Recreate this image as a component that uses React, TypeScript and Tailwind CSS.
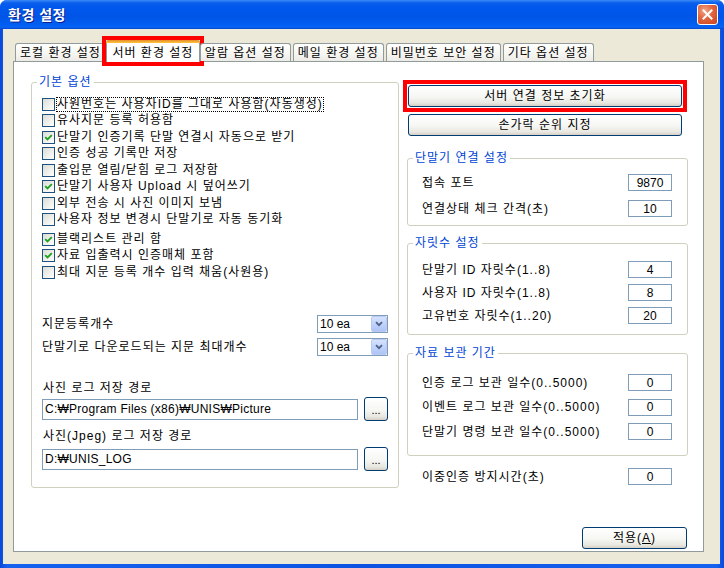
import React from "react";

type Opt = { label: string; checked?: boolean; focus?: boolean };

const basicOptions: Opt[] = [
  { label: "사원번호는 사용자ID를 그대로 사용함(자동생성)", focus: true },
  { label: "유사지문 등록 허용함" },
  { label: "단말기 인증기록 단말 연결시 자동으로 받기", checked: true },
  { label: "인증 성공 기록만 저장" },
  { label: "출입문 열림/닫힘 로그 저장함" },
  { label: "단말기 사용자 Upload 시 덮어쓰기", checked: true },
  { label: "외부 전송 시 사진 이미지 보냄" },
  { label: "사용자 정보 변경시 단말기로 자동 동기화" },
];

const extraOptions: Opt[] = [
  { label: "블랙리스트 관리 함", checked: true },
  { label: "자료 입출력시 인증매체 포함", checked: true },
  { label: "최대 지문 등록 개수 입력 채움(사원용)" },
];

const tabs = ["로컬 환경 설정", "서버 환경 설정", "알람 옵션 설정", "메일 환경 설정", "비밀번호 보안 설정", "기타 옵션 설정"];

function CheckBox({ checked }: { checked?: boolean }) {
  return (
    <span className="w-[13px] h-[13px] shrink-0 border border-[#1C5180] bg-[linear-gradient(135deg,#DCDCD7_0%,#F3F3EF_65%,#FFFFFF_100%)] flex items-center justify-center">
      {checked && (
        <svg width="9" height="9" viewBox="0 0 9 9">
          <path d="M1.2 4.2 L3.5 6.5 L7.8 2.2" fill="none" stroke="#21A121" strokeWidth="1.9" />
        </svg>
      )}
    </span>
  );
}

function OptionRow({ opt }: { opt: Opt }) {
  return (
    <div className="h-[16.5px] flex items-center">
      <CheckBox checked={opt.checked} />
      <span className={`ml-[2px] leading-[13px] ${opt.focus ? "outline outline-1 outline-dotted outline-black" : ""}`}>
        {opt.label}
      </span>
    </div>
  );
}

function Group({ title, className, children }: { title: string; className: string; children: React.ReactNode }) {
  return (
    <fieldset className={`border border-[#D0D0BF] rounded-[3px] ${className}`}>
      <legend className="ml-[5px] px-[2px] leading-[14px] text-[#0046D5]">{title}</legend>
      {children}
    </fieldset>
  );
}

function XpButton({ children, className }: { children: React.ReactNode; className: string }) {
  return (
    <button className={`border border-[#003C74] rounded-[3px] bg-[linear-gradient(to_bottom,#FFFFFF_0%,#F6F6F3_55%,#E8E7E0_85%,#D6D0C5_100%)] flex items-center justify-center text-black ${className}`}>
      {children}
    </button>
  );
}

function ComboBox({ value }: { value: string }) {
  return (
    <div className="w-[71px] h-[18px] border border-[#7F9DB9] bg-white flex items-center tracking-normal">
      <span className="flex-1 pl-[2px] leading-[14px]">{value}</span>
      <span className="w-[16px] h-[16px] rounded-[2px] border border-[#B9CBF3] bg-[linear-gradient(to_bottom,#D6E2FC_0%,#C1D3FB_50%,#AEC4F5_100%)] flex items-center justify-center">
        <svg width="8" height="6" viewBox="0 0 8 6">
          <path d="M1 1.2 L4 4.2 L7 1.2" fill="none" stroke="#4D6185" strokeWidth="1.8" />
        </svg>
      </span>
    </div>
  );
}

function PathRow({ value }: { value: string }) {
  return (
    <div className="h-[24px] flex items-center justify-between">
      <div className="w-[316px] h-[21px] border border-[#7F9DB9] bg-white flex items-center pl-[2px] tracking-[0.25px]">{value}</div>
      <XpButton className="w-[24px] h-[24px] items-end pb-[5px] text-[11px] leading-[10px] tracking-normal">...</XpButton>
    </div>
  );
}

function NumRow({ label, value }: { label: string; value: string }) {
  return (
    <div className="h-[17px] flex items-center justify-between">
      <span className="leading-[14px]">{label}</span>
      <div className="w-[44px] h-[17px] border border-[#7F9DB9] bg-white flex items-center justify-center leading-[14px] tracking-normal">{value}</div>
    </div>
  );
}

export default function App() {
  return (
    <div className="w-[724px] h-[568px] bg-white font-['Liberation_Sans','Noto_Sans_CJK_KR',sans-serif] text-[12px] tracking-[1px] text-black">
      <div className="w-full h-full rounded-t-[7px] overflow-hidden flex flex-col bg-[linear-gradient(to_right,#0A48DA,#1662EE_1%,#0C53E2_50%,#1662EE_99%,#0A48DA)]">
        {/* title bar */}
        <div className="h-[29px] shrink-0 flex items-center justify-between pl-[8px] pr-[6px] bg-[linear-gradient(to_bottom,#3B8BF6_0%,#0A5EEC_10%,#0058EE_25%,#0055E6_60%,#0060F4_88%,#0A63F0_94%,#0046CC_100%)]">
          <span className="text-white font-bold text-[14px] tracking-[0.5px] leading-[16px] [text-shadow:1px_1px_0_#0A1E8C]">환경 설정</span>
          <span className="w-[21px] h-[21px] rounded-[3px] border border-white bg-[radial-gradient(circle_at_35%_30%,#F3A58A_0%,#E2643C_45%,#C7431F_100%)] flex items-center justify-center">
            <svg width="11" height="11" viewBox="0 0 11 11">
              <path d="M1.5 1.5 L9.5 9.5 M9.5 1.5 L1.5 9.5" stroke="#FFFFFF" strokeWidth="2" strokeLinecap="square" />
            </svg>
          </span>
        </div>

        {/* client area */}
        <div className="flex-1 ml-[3px] mr-[4px] mb-[4px] bg-[#ECE9D8] flex flex-col pl-[10px] pr-[16px] pt-[11px] pb-[12px]">
          {/* tabs */}
          <div className="flex items-end pl-[2px] gap-[2px] h-[21px] relative z-10">
            {tabs.map((t, i) =>
              i === 1 ? (
                <div key={t} className="-mx-[2px] -mb-[1px] outline-4 outline-[#FF0000] outline-offset-0">
                  <div className="h-[22px] px-[5.5px] bg-white border border-[#919B9C] border-b-0 border-t-0 rounded-t-[3px] flex flex-col">
                    <span className="h-[3px] -mx-[6.5px] rounded-t-[3px] bg-[linear-gradient(to_bottom,#E68B2C,#FFC73C)]" />
                    <span className="flex-1 flex items-center leading-[14px]">{t}</span>
                  </div>
                </div>
              ) : (
                <div
                  key={t}
                  className="h-[18px] px-[4px] border border-[#919B9C] border-b-0 rounded-t-[3px] bg-[linear-gradient(to_bottom,#FFFFFF_0%,#F7F7F4_50%,#ECEBE6_100%)] flex items-center leading-[14px]"
                >
                  {t}
                </div>
              )
            )}
          </div>

          {/* panel */}
          <div className="flex-1 border border-[#919B9C] bg-white flex flex-col pt-[13px] pl-[17px] pr-[14px]">
            <div className="flex gap-[8px]">
              {/* left */}
              <Group title="기본 옵션" className="w-[368px] h-[413px]">
                <div className="px-[10px] pt-[7px] flex flex-col">
                  {basicOptions.map((o) => (
                    <OptionRow key={o.label} opt={o} />
                  ))}
                  <div className="mt-[3px] flex flex-col">
                    {extraOptions.map((o) => (
                      <OptionRow key={o.label} opt={o} />
                    ))}
                  </div>

                  <div className="mt-[34.5px] h-[18px] flex items-center justify-between">
                    <span>지문등록개수</span>
                    <ComboBox value="10 ea" />
                  </div>
                  <div className="mt-[5px] h-[18px] flex items-center justify-between">
                    <span>단말기로 다운로드되는 지문 최대개수</span>
                    <ComboBox value="10 ea" />
                  </div>

                  <div className="mt-[24px] h-[16px] flex items-center pl-[1px]">사진 로그 저장 경로</div>
                  <div className="mt-[1px]">
                    <PathRow value="C:₩Program Files (x86)₩UNIS₩Picture" />
                  </div>
                  <div className="mt-[7px] h-[16px] flex items-center pl-[1px]">사진(Jpeg) 로그 저장 경로</div>
                  <div className="mt-[3px]">
                    <PathRow value="D:₩UNIS_LOG" />
                  </div>
                </div>
              </Group>

              {/* right */}
              <div className="w-[281px] flex flex-col">
                <div className="mt-[10px] ml-[1px] w-[274px] outline-4 outline-[#FF0000] outline-offset-[1px]">
                  <XpButton className="w-[274px] h-[22px]">서버 연결 정보 초기화</XpButton>
                </div>
                <XpButton className="mt-[7px] ml-[1px] w-[274px] h-[22px]">손가락 순위 지정</XpButton>

                <Group title="단말기 연결 설정" className="mt-[15px] h-[75px]">
                  <div className="pl-[14px] pr-[15px] pt-[9px] flex flex-col gap-[9px]">
                    <NumRow label="접속 포트" value="9870" />
                    <NumRow label="연결상태 체크 간격(초)" value="10" />
                  </div>
                </Group>

                <Group title="자릿수 설정" className="mt-[10px] h-[99px]">
                  <div className="pl-[14px] pr-[15px] pt-[11px] flex flex-col gap-[6px]">
                    <NumRow label="단말기 ID 자릿수(1..8)" value="4" />
                    <NumRow label="사용자 ID 자릿수(1..8)" value="8" />
                    <NumRow label="고유번호 자릿수(1..20)" value="20" />
                  </div>
                </Group>

                <Group title="자료 보관 기간" className="mt-[11px] h-[110px]">
                  <div className="pl-[14px] pr-[15px] pt-[14px] flex flex-col gap-[7.5px]">
                    <NumRow label="인증 로그 보관 일수(0..5000)" value="0" />
                    <NumRow label="이벤트 로그 보관 일수(0..5000)" value="0" />
                    <NumRow label="단말기 명령 보관 일수(0..5000)" value="0" />
                  </div>
                </Group>

                <div className="mt-[12px] pl-[15px] pr-[16px]">
                  <NumRow label="이중인증 방지시간(초)" value="0" />
                </div>
              </div>
            </div>

            <div className="mt-[39px] flex justify-end pr-[2px]">
              <XpButton className="w-[105px] h-[22px]">
                적용(<u>A</u>)
              </XpButton>
            </div>
          </div>
        </div>
      </div>
    </div>
  );
}
